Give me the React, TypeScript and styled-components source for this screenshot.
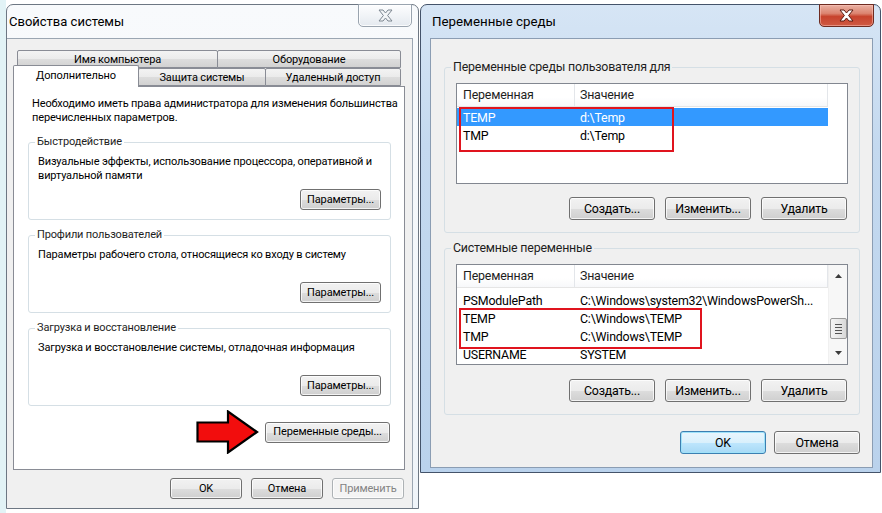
import React from "react";
import styled, { createGlobalStyle } from "styled-components";

const GlobalStyle = createGlobalStyle`
  html, body { margin: 0; padding: 0; background: #fff; }
  body { font-family: Roboto, "Noto Sans", sans-serif; color: #000; }
  #root { width: 882px; height: 513px; overflow: hidden; }
  * { box-sizing: border-box; }
`;

const Desktop = styled.div`
  display: flex;
  align-items: flex-start;
  gap: 1px;
  width: 882px;
  height: 513px;
  padding: 4px 0 0 6px;
  overflow: hidden;
  background: linear-gradient(90deg, #e2f3f6 0, #e2f3f6 6px, #fff 6px);
`;

const Window = styled.div<{ $active?: boolean; $w: number; $h: number }>`
  width: ${(p) => p.$w}px;
  height: ${(p) => p.$h}px;
  flex: none;
  border: 1px solid ${(p) => (p.$active ? "#44536a" : "#6d7783")};
  border-radius: 7px 7px 0 0;
  background: ${(p) =>
    p.$active
      ? "linear-gradient(180deg, #d6e5f5 0%, #c4d9ef 30%, #bad2ec 100%)"
      : "linear-gradient(180deg, #f8fafc 0%, #eff4f9 100%)"};
  display: flex;
  flex-direction: column;
`;

const TitleBar = styled.div<{ $pl: number }>`
  height: 33px;
  flex: none;
  display: flex;
  align-items: flex-start;
  justify-content: space-between;
  padding-left: ${(p) => p.$pl}px;
`;

const Title = styled.div<{ $fs: number }>`
  margin-top: 7px;
  font-size: ${(p) => p.$fs}px;
  line-height: 20px;
  color: #000;
`;

const CloseButton = styled.div<{ $active?: boolean }>`
  width: ${(p) => (p.$active ? 55 : 54)}px;
  height: 23px;
  margin: -1px 6px 0 0;
  display: flex;
  align-items: center;
  justify-content: center;
  border: 1px solid ${(p) => (p.$active ? "#6e2b20" : "#9aa4af")};
  border-radius: 0 0 5px 5px;
  background: ${(p) =>
    p.$active
      ? "linear-gradient(180deg, #eab1a3 0%, #dc8470 40%, #c7432d 55%, #cf5a43 100%)"
      : "linear-gradient(180deg, #fdfdfe 0%, #f1f4f7 50%, #e4e9ef 100%)"};
  box-shadow: inset 0 0 0 1px ${(p) => (p.$active ? "rgba(255,200,190,0.5)" : "rgba(255,255,255,0.8)")};
`;

const LeftClient = styled.div`
  flex: 1;
  margin-right: 5px;
  background: #f0f0f0;
  border-top: 1px solid #9ba6b2;
  border-right: 1px solid #9ba6b2;
  padding: 11px 7px 0 6px;
  display: flex;
  flex-direction: column;
  font-size: 11px;
  letter-spacing: -0.15px;
`;

const RightClient = styled.div`
  height: 430px;
  flex: none;
  margin: 0 7px 0 9px;
  background: #f0f0f0;
  border: 1px solid #8b9db3;
  padding: 20px 12px 0 13px;
  display: flex;
  flex-direction: column;
  font-size: 12.4px;
  letter-spacing: -0.2px;
`;

/* ---------- Tabs ---------- */

const TabRow = styled.div<{ $indent: number; $h: number; $mt: number }>`
  display: flex;
  align-items: flex-end;
  height: ${(p) => p.$h}px;
  margin-top: ${(p) => p.$mt}px;
  padding-left: ${(p) => p.$indent}px;
`;

const Tab = styled.div<{ $w: number; $selected?: boolean }>`
  width: ${(p) => p.$w}px;
  height: ${(p) => (p.$selected ? 22 : 18)}px;
  margin-left: -1px;
  &:first-child { margin-left: 0; }
  margin-bottom: ${(p) => (p.$selected ? -1 : 0)}px;
  position: relative;
  z-index: ${(p) => (p.$selected ? 2 : 1)};
  border: 1px solid #898c95;
  border-bottom: ${(p) => (p.$selected ? "none" : "1px solid #898c95")};
  border-radius: 2px 2px 0 0;
  background: ${(p) =>
    p.$selected
      ? "#fff"
      : "linear-gradient(180deg, #f3f3f3 0%, #ebebeb 50%, #dddddd 51%, #d2d2d2 100%)"};
  display: flex;
  align-items: ${(p) => (p.$selected ? "flex-start" : "center")};
  justify-content: center;
  padding-top: ${(p) => (p.$selected ? 2 : 0)}px;
  line-height: 15px;
  white-space: nowrap;
`;

const TabPanel = styled.div`
  height: 384px;
  flex: none;
  background: #fff;
  border: 1px solid #898c95;
  padding: 10px 13px 0 14px;
  display: flex;
  flex-direction: column;
  position: relative;
  z-index: 1;
`;

const Note = styled.div`
  line-height: 14px;
  padding-left: 4px;
  white-space: nowrap;
`;

/* ---------- Group boxes ---------- */

const Group = styled.fieldset<{ $pad: string; $mt: number }>`
  margin: ${(p) => p.$mt}px 0 0 0;
  padding: ${(p) => p.$pad};
  min-width: 0;
  border: 1px solid #d5dfe5;
  border-radius: 3px;
`;

const Legend = styled.legend<{ $shift: number; $lh: number }>`
  padding: 0 2px;
  margin-left: ${(p) => p.$shift}px;
  line-height: ${(p) => p.$lh}px;
  color: #1e1e1e;
`;

const Desc = styled.div`
  line-height: 14px;
  min-height: 28px;
  white-space: nowrap;
`;

const ButtonRow = styled.div<{ $mt: number; $gap: number; $mr?: number }>`
  display: flex;
  justify-content: flex-end;
  align-items: center;
  gap: ${(p) => p.$gap}px;
  margin-top: ${(p) => p.$mt}px;
  margin-right: ${(p) => p.$mr ?? 0}px;
`;

const Button = styled.div<{ $w: number; $h: number; $disabled?: boolean; $default?: boolean }>`
  width: ${(p) => p.$w}px;
  height: ${(p) => p.$h}px;
  flex: none;
  display: flex;
  align-items: center;
  justify-content: center;
  border: 1px solid ${(p) => (p.$default ? "#3c7fb1" : p.$disabled ? "#adb2b5" : "#707070")};
  border-radius: 3px;
  background: ${(p) =>
    p.$disabled
      ? "#f4f4f4"
      : p.$default
      ? "linear-gradient(180deg, #eaf6fd 0%, #d9f0fc 50%, #bee6fd 51%, #a7d9f5 100%)"
      : "linear-gradient(180deg, #f2f2f2 0%, #ebebeb 50%, #dddddd 51%, #cfcfcf 100%)"};
  box-shadow: inset 0 0 0 1px ${(p) => (p.$default ? "#9fe2f9" : "rgba(255,255,255,0.75)")};
  color: ${(p) => (p.$disabled ? "#838383" : "#000")};
  white-space: nowrap;
  padding-bottom: 1px;
`;

const ArrowIcon = () => (
  <svg width="63" height="44" viewBox="0 0 63 44">
    <polygon
      points="1.5,12.5 32,12.5 32,1.5 61,22 32,42.5 32,31.5 1.5,31.5"
      fill="#f20d0d"
      stroke="#000"
      strokeWidth="2.2"
      strokeLinejoin="miter"
    />
  </svg>
);

const CloseGlyph = ({ active }: { active?: boolean }) => (
  <svg width="15" height="13" viewBox="0 0 15 13">
    <polygon
      points="1,1 5,1 7.5,4 10,1 14,1 9.6,6.5 14,12 10,12 7.5,9 5,12 1,12 5.4,6.5"
      fill={active ? "#ffffff" : "#f3f5f7"}
      stroke={active ? "#5a1a10" : "#7d8791"}
      strokeWidth="1"
      strokeLinejoin="round"
    />
  </svg>
);

/* ---------- List views ---------- */

const List = styled.div`
  height: 101px;
  border: 1px solid #828790;
  background: #fff;
  display: flex;
`;

const ListMain = styled.div`
  width: 371px;
  flex: none;
  display: flex;
  flex-direction: column;
`;

const Header = styled.div`
  height: 23px;
  flex: none;
  display: flex;
  border-bottom: 1px solid #e5e5e5;
  background: linear-gradient(180deg, #ffffff 0%, #ffffff 60%, #f7f8fa 100%);
  color: #1e1e1e;
`;

const HeadCell = styled.div<{ $w?: number; $pl: number }>`
  ${(p) => (p.$w ? `width: ${p.$w}px; flex: none;` : "flex: 1;")}
  border-right: 1px solid #e3e6ea;
  padding-left: ${(p) => p.$pl}px;
  display: flex;
  align-items: center;
  padding-bottom: 1px;
`;

const Rows = styled.div<{ $pt: number }>`
  padding-top: ${(p) => p.$pt}px;
  display: flex;
  flex-direction: column;
`;

const Marked = styled.div<{ $w: number; $h: number }>`
  position: relative;
  display: flex;
  flex-direction: column;
  &::after {
    content: "";
    position: absolute;
    left: 2px;
    top: -1px;
    width: ${(p) => p.$w}px;
    height: ${(p) => p.$h}px;
    border: 2px solid #e0141e;
    pointer-events: none;
  }
`;

const Row = styled.div<{ $selected?: boolean }>`
  height: 18px;
  display: flex;
  align-items: center;
  background: ${(p) => (p.$selected ? "#3399ff" : "transparent")};
  color: ${(p) => (p.$selected ? "#fff" : "#000")};
  white-space: nowrap;
`;

const Cell = styled.div<{ $w?: number; $pl: number }>`
  ${(p) => (p.$w ? `width: ${p.$w}px; flex: none;` : "flex: 1;")}
  padding-left: ${(p) => p.$pl}px;
  overflow: hidden;
`;

const ScrollSlot = styled.div<{ $show?: boolean }>`
  flex: 1;
  display: flex;
  flex-direction: column;
  background: ${(p) => (p.$show ? "#f7f7f7" : "#fff")};
  border-left: ${(p) => (p.$show ? "1px solid #f0f0f0" : "none")};
`;

const ScrollArrow = styled.div`
  height: 22px;
  flex: none;
  display: flex;
  align-items: center;
  justify-content: center;
`;

const ScrollTrack = styled.div`
  flex: 1;
  display: flex;
  flex-direction: column;
  align-items: center;
`;

const ThumbSpacer = styled.div<{ $h: number }>`
  height: ${(p) => p.$h}px;
  flex: none;
`;

const Thumb = styled.div`
  width: 17px;
  height: 21px;
  border: 1px solid #9a9a9a;
  border-radius: 2px;
  background: linear-gradient(90deg, #f4f4f4 0%, #e8e8e8 50%, #d8d8d8 100%);
  display: flex;
  flex-direction: column;
  align-items: center;
  justify-content: center;
  gap: 2px;
`;

const Grip = styled.div`
  width: 7px;
  height: 1px;
  background: #555;
`;

const Tri = ({ up }: { up?: boolean }) => (
  <svg width="7" height="4" viewBox="0 0 7 4">
    <polygon points={up ? "0,4 7,4 3.5,0" : "0,0 7,0 3.5,4"} fill="#3c3c3c" />
  </svg>
);

type Var = { name: string; value: string; selected?: boolean };

const userVars: Var[] = [
  { name: "TEMP", value: "d:\\Temp", selected: true },
  { name: "TMP", value: "d:\\Temp" },
];

const sysTop: Var[] = [{ name: "PSModulePath", value: "C:\\Windows\\system32\\WindowsPowerSh..." }];
const sysMarked: Var[] = [
  { name: "TEMP", value: "C:\\Windows\\TEMP" },
  { name: "TMP", value: "C:\\Windows\\TEMP" },
];
const sysBottom: Var[] = [{ name: "USERNAME", value: "SYSTEM" }];

const VarRow = ({ v }: { v: Var }) => (
  <Row $selected={v.selected}>
    <Cell $w={118} $pl={6}>{v.name}</Cell>
    <Cell $pl={5}>{v.value}</Cell>
  </Row>
);

const ListHeader = () => (
  <Header>
    <HeadCell $w={118} $pl={6}>Переменная</HeadCell>
    <HeadCell $pl={5}>Значение</HeadCell>
  </Header>
);

const LeftWindow = () => (
  <Window $w={413} $h={505}>
    <TitleBar $pl={2}>
      <Title $fs={13}>Свойства системы</Title>
      <CloseButton>
        <CloseGlyph />
      </CloseButton>
    </TitleBar>
    <LeftClient>
      <TabRow $indent={4} $h={18} $mt={0}>
        <Tab $w={201}>Имя компьютера</Tab>
        <Tab $w={184}>Оборудование</Tab>
      </TabRow>
      <TabRow $indent={0} $h={19} $mt={-1}>
        <Tab $w={126} $selected>Дополнительно</Tab>
        <Tab $w={128}>Защита системы</Tab>
        <Tab $w={136}>Удаленный доступ</Tab>
      </TabRow>
      <TabPanel>
        <Note>
          Необходимо иметь права администратора для изменения большинства
          <br />
          перечисленных параметров.
        </Note>
        <Group $pad="6px 9px 9px 9px" $mt={10}>
          <Legend $shift={-3} $lh={14}>Быстродействие</Legend>
          <Desc>
            Визуальные эффекты, использование процессора, оперативной и
            <br />
            виртуальной памяти
          </Desc>
          <ButtonRow $mt={6} $gap={0}>
            <Button $w={81} $h={21}>Параметры...</Button>
          </ButtonRow>
        </Group>
        <Group $pad="6px 9px 9px 9px" $mt={8}>
          <Legend $shift={-3} $lh={14}>Профили пользователей</Legend>
          <Desc>Параметры рабочего стола, относящиеся ко входу в систему</Desc>
          <ButtonRow $mt={6} $gap={0}>
            <Button $w={81} $h={21}>Параметры...</Button>
          </ButtonRow>
        </Group>
        <Group $pad="6px 9px 9px 9px" $mt={8}>
          <Legend $shift={-3} $lh={14}>Загрузка и восстановление</Legend>
          <Desc>Загрузка и восстановление системы, отладочная информация</Desc>
          <ButtonRow $mt={6} $gap={0}>
            <Button $w={81} $h={21}>Параметры...</Button>
          </ButtonRow>
        </Group>
        <ButtonRow $mt={4} $gap={6} $mr={1}>
          <ArrowIcon />
          <Button $w={125} $h={21}>Переменные среды...</Button>
        </ButtonRow>
      </TabPanel>
      <ButtonRow $mt={8} $gap={9} $mr={1}>
        <Button $w={72} $h={21}>OK</Button>
        <Button $w={72} $h={21}>Отмена</Button>
        <Button $w={72} $h={21} $disabled>Применить</Button>
      </ButtonRow>
    </LeftClient>
  </Window>
);

const RightWindow = () => (
  <Window $w={461} $h={469} $active>
    <TitleBar $pl={11}>
      <Title $fs={13.3}>Переменные среды</Title>
      <CloseButton $active>
        <CloseGlyph active />
      </CloseButton>
    </TitleBar>
    <RightClient>
      <Group $pad="8px 11px 12px 11px" $mt={0}>
        <Legend $shift={-5} $lh={16}>Переменные среды пользователя для</Legend>
        <List>
          <ListMain>
            <ListHeader />
            <Rows $pt={1}>
              <Marked $w={211} $h={41}>
                {userVars.map((v) => (
                  <VarRow key={v.name} v={v} />
                ))}
              </Marked>
            </Rows>
          </ListMain>
          <ScrollSlot />
        </List>
        <ButtonRow $mt={13} $gap={10} $mr={1}>
          <Button $w={86} $h={23}>Создать...</Button>
          <Button $w={86} $h={23}>Изменить...</Button>
          <Button $w={86} $h={23}>Удалить</Button>
        </ButtonRow>
      </Group>
      <Group $pad="8px 11px 12px 11px" $mt={7}>
        <Legend $shift={-5} $lh={16}>Системные переменные</Legend>
        <List>
          <ListMain>
            <ListHeader />
            <Rows $pt={3}>
              {sysTop.map((v) => (
                <VarRow key={v.name} v={v} />
              ))}
              <Marked $w={239} $h={37}>
                {sysMarked.map((v) => (
                  <VarRow key={v.name} v={v} />
                ))}
              </Marked>
              {sysBottom.map((v) => (
                <VarRow key={v.name} v={v} />
              ))}
            </Rows>
          </ListMain>
          <ScrollSlot $show>
            <ScrollArrow>
              <Tri up />
            </ScrollArrow>
            <ScrollTrack>
              <ThumbSpacer $h={31} />
              <Thumb>
                <Grip />
                <Grip />
                <Grip />
                <Grip />
              </Thumb>
            </ScrollTrack>
            <ScrollArrow>
              <Tri />
            </ScrollArrow>
          </ScrollSlot>
        </List>
        <ButtonRow $mt={14} $gap={10} $mr={1}>
          <Button $w={86} $h={23}>Создать...</Button>
          <Button $w={86} $h={23}>Изменить...</Button>
          <Button $w={86} $h={23}>Удалить</Button>
        </ButtonRow>
      </Group>
      <ButtonRow $mt={16} $gap={8} $mr={0}>
        <Button $w={86} $h={23} $default>OK</Button>
        <Button $w={86} $h={23}>Отмена</Button>
      </ButtonRow>
    </RightClient>
  </Window>
);

export default function App() {
  return (
    <>
      <GlobalStyle />
      <Desktop>
        <LeftWindow />
        <RightWindow />
      </Desktop>
    </>
  );
}
